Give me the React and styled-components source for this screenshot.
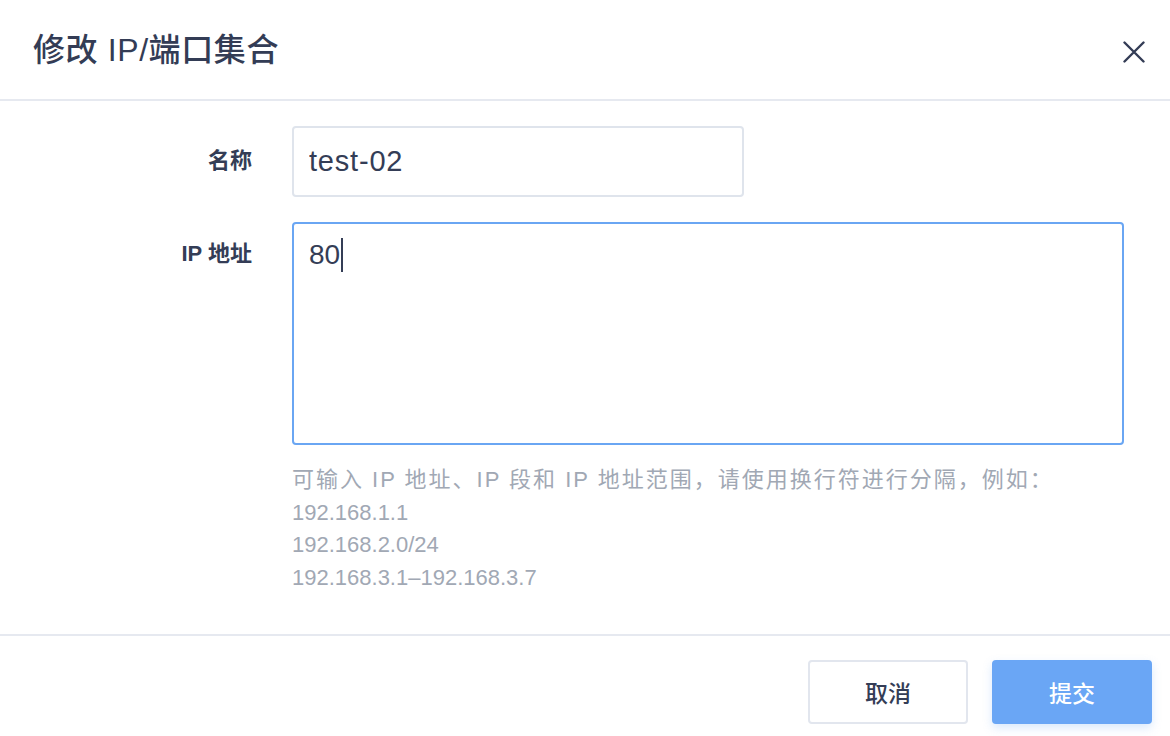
import React, { useState } from 'react'
import styled, { createGlobalStyle } from 'styled-components'

const Global = createGlobalStyle`
  html, body { margin: 0; padding: 0; background: #fff; }
  body { font-family: "Noto Sans CJK SC", "Noto Sans", "Liberation Sans", sans-serif; }
  * { box-sizing: border-box; }
`

const Dialog = styled.div`
  width: 1170px;
  height: 736px;
  background: #fff;
  display: flex;
  flex-direction: column;
  overflow: hidden;
`

const Header = styled.div`
  height: 101px;
  flex-shrink: 0;
  display: flex;
  align-items: center;
  justify-content: space-between;
  padding: 0 22px 6px 33px;
  border-bottom: 2px solid #e6e9f0;
`

const Title = styled.h2`
  margin: 0;
  font-family: "Liberation Sans", "Noto Sans CJK SC", sans-serif;
  font-size: 32px;
  font-weight: 500;
  color: #333c55;
  letter-spacing: 0.6px;
`

const Close = styled.button`
  border: 0;
  background: none;
  padding: 0;
  width: 28px;
  height: 28px;
  margin-top: 10px;
  cursor: pointer;
  display: flex;
  align-items: center;
  justify-content: center;
`

const Body = styled.div`
  flex: 1;
  padding: 25px 46px 0 0;
  display: flex;
  flex-direction: column;
  gap: 25px;
  border-bottom: 2px solid #e6e9f0;
`

const Row = styled.div`
  display: flex;
  align-items: flex-start;
  gap: 40px;
`

const Label = styled.label`
  width: 252px;
  flex-shrink: 0;
  text-align: right;
  font-family: "Liberation Sans", "Noto Sans CJK SC", sans-serif;
  font-size: 22px;
  font-weight: 600;
  color: #343d56;
  line-height: 30px;
  padding-top: ${p => p.$top}px;
`

const Field = styled.div`
  flex: 1;
  display: flex;
  flex-direction: column;
`

const Input = styled.input`
  width: 452px;
  height: 71px;
  border: 2px solid #dfe4ec;
  border-radius: 4px;
  padding: 0 15px;
  font-family: "Liberation Sans", "Noto Sans CJK SC", sans-serif;
  font-size: 29px;
  letter-spacing: 0.8px;
  color: #343d56;
  outline: none;
`

const AreaBox = styled.div`
  width: 832px;
  height: 223px;
  border: 2px solid #6aa6f3;
  border-radius: 4px;
  padding: 13px 15px;
  font-family: "Liberation Sans", "Noto Sans CJK SC", sans-serif;
  font-size: 28px;
  line-height: 36px;
  color: #343d56;
  white-space: pre-wrap;
  outline: none;
`

const Caret = styled.span`
  display: inline-block;
  width: 2px;
  height: 34px;
  margin-left: 1px;
  vertical-align: -8px;
  background: #343d56;
`

const Hint = styled.div`
  margin-top: 19px;
  font-size: 22px;
  line-height: 32.5px;
  color: #a1a8b4;
  font-family: "Liberation Sans", "Noto Sans CJK SC", sans-serif;
`

const HintLine = styled.div`
  letter-spacing: ${p => (p.$wide ? '2px' : '0')};
`

const Footer = styled.div`
  height: 100px;
  flex-shrink: 0;
  display: flex;
  justify-content: flex-end;
  align-items: flex-start;
  gap: 24px;
  padding: 24px 18px 0 0;
`

const Button = styled.button`
  width: 160px;
  height: 64px;
  border-radius: 4px;
  font-family: "Noto Sans CJK SC", sans-serif;
  font-size: 23px;
  font-weight: 500;
  cursor: pointer;
  border: 2px solid ${p => (p.$primary ? '#6aa6f5' : '#e2e6ee')};
  background: ${p => (p.$primary ? '#6aa6f5' : '#fff')};
  color: ${p => (p.$primary ? '#fff' : '#343d56')};
  box-shadow: ${p => (p.$primary ? '0 4px 10px rgba(106,166,245,0.25)' : 'none')};
`

const examples = ['192.168.1.1', '192.168.2.0/24', '192.168.3.1–192.168.3.7']

export default function App() {
  const [name, setName] = useState('test-02')
  const ips = '80'

  return (
    <>
      <Global />
      <Dialog>
        <Header>
          <Title>修改 IP/端口集合</Title>
          <Close aria-label="close">
            <svg width="22" height="22" viewBox="0 0 22 22">
              <path d="M1.5 1.5 L20.5 20.5 M20.5 1.5 L1.5 20.5" stroke="#333c55" strokeWidth="2.4" strokeLinecap="round" />
            </svg>
          </Close>
        </Header>
        <Body>
          <Row>
            <Label $top={20}>名称</Label>
            <Field>
              <Input value={name} onChange={e => setName(e.target.value)} />
            </Field>
          </Row>
          <Row>
            <Label $top={17}>IP 地址</Label>
            <Field>
              <AreaBox role="textbox" aria-multiline="true">
                {ips}
                <Caret />
              </AreaBox>
              <Hint>
                <HintLine $wide>可输入 IP 地址、IP 段和 IP 地址范围，请使用换行符进行分隔，例如：</HintLine>
                {examples.map(ex => (
                  <HintLine key={ex}>{ex}</HintLine>
                ))}
              </Hint>
            </Field>
          </Row>
        </Body>
        <Footer>
          <Button>取消</Button>
          <Button $primary>提交</Button>
        </Footer>
      </Dialog>
    </>
  )
}
